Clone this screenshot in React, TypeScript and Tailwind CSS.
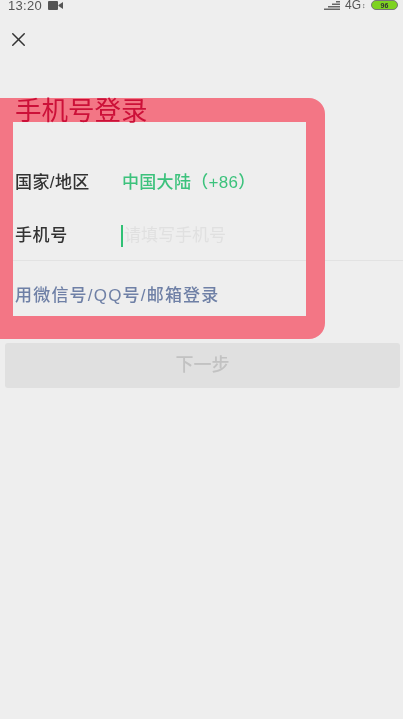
import React from 'react';
import { X } from 'lucide-react';

const cjk = { fontFamily: '"Liberation Sans", "Noto Sans CJK SC", "Noto Sans", sans-serif' };

function StatusBar() {
  return (
    <div className="flex h-[10px] items-center justify-between pl-2 pr-[5px] text-[#555]">
      <div className="flex items-center gap-[6px]">
        <span className="text-[13px] leading-none tracking-[0.3px]">13:20</span>
        <svg width="15" height="9" viewBox="0 0 15 9" fill="#555">
          <rect x="0" y="0" width="10" height="9" rx="1" />
          <path d="M10.5 4 15 1v7l-4.500-3z" />
        </svg>
      </div>
      <div className="flex items-center gap-[5px]">
        <svg width="16" height="9" viewBox="0 0 16 9" fill="#666">
          <rect x="12" y="0" width="4" height="1.500" />
          <rect x="8" y="2.500" width="8" height="1.500" />
          <rect x="4" y="5" width="12" height="1.500" />
          <rect x="0" y="7.500" width="16" height="1.500" />
        </svg>
        <span className="flex items-center text-[12px] leading-none">
          4G<span className="ml-[1px] w-[4px] text-[7px] leading-[7px]">↕</span>
        </span>
        <div className="flex h-[10px] w-[27px] items-center justify-center rounded-full border border-[#777] bg-[#7ed321] text-[7px] font-bold leading-none text-[#333]">
          96
        </div>
      </div>
    </div>
  );
}

export default function App() {
  return (
    <div className="relative h-[719px] w-[403px] overflow-hidden bg-[#eeeeee] blur-[0.5px]" style={cjk}>
      <StatusBar />
      <div className="pl-[7px] pt-[18px]">
        <X size={23} strokeWidth={1.5} className="text-[#333]" />
      </div>

      <h1 className="relative z-10 ml-[15px] mt-[42px] text-[26.500px] font-normal leading-[36px] text-[#cc1038]">手机号登录</h1>

      <div className="mt-[25px] flex h-[57px] items-center pl-[15px] text-[17px]">
        <span className="w-[107px] font-medium tracking-[0.4px] text-[#333]">国家/地区</span>
        <span className="font-medium tracking-[0.3px] text-[#3cc27c]">中国大陆（+86）</span>
      </div>

      <div className="flex h-[50px] items-center border-b border-[#e2e2e2] pl-[15px] text-[17px]">
        <span className="w-[106px] font-medium tracking-[0.6px] text-[#333]">手机号</span>
        <span className="h-[22px] w-[2px] bg-[#2fc074]" />
        <span className="ml-[1px] text-[#e0e0e0]">请填写手机号</span>
      </div>

      <div className="mt-[23px] pl-[15px] text-[17px] font-medium leading-[24px] tracking-[1.2px] text-[#6f80a6]">用微信号/QQ号/邮箱登录</div>

      <button className="mx-[5px] mt-[35px] flex h-[45px] w-[395px] items-center justify-center rounded-[3px] bg-[#e0e0e0] text-[18px] font-medium text-[#c2c2c2]">
        下一步
      </button>

      <div className="absolute left-[-20px] top-[98px] h-[241px] w-[345px] rounded-[16px] border-b-[23px] border-l-[33px] border-r-[19px] border-t-[24px] border-[#f37685]" />
    </div>
  );
}
